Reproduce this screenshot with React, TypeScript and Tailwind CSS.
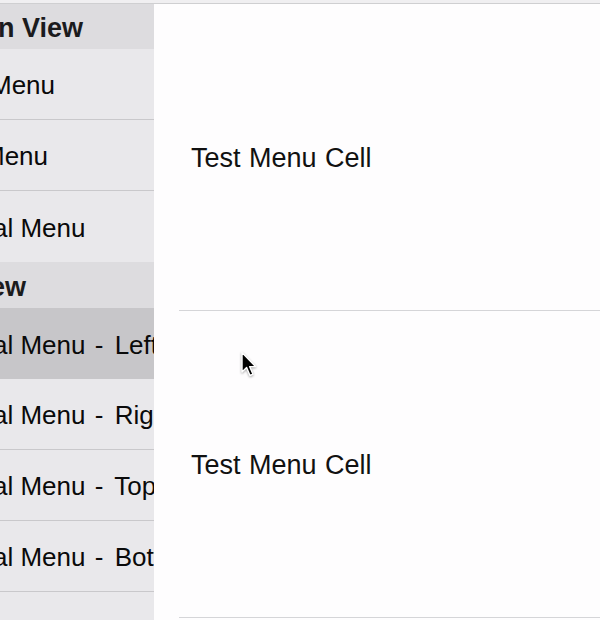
import type { ReactNode } from "react";

type Row = {
  label: string;
  side?: string;
  shift: string;
  selected?: boolean;
  divider?: boolean;
};

const sections: { title: string; shift: string; height: string; rows: Row[] }[] = [
  {
    title: "n View",
    shift: "ml-[-2px]",
    height: "h-[45px] pt-[3px]",
    rows: [
      { label: "Menu", shift: "ml-[-10px]", divider: true },
      { label: "Menu", shift: "ml-[-17px]", divider: true },
      { label: "al Menu", shift: "ml-[-7px]" },
    ],
  },
  {
    title: "ew",
    shift: "ml-[-10px]",
    height: "h-[46px] pt-[5px]",
    rows: [
      { label: "al Menu", side: "Left", shift: "ml-[-7px]", selected: true },
      { label: "al Menu", side: "Right", shift: "ml-[-7px]", divider: true },
      { label: "al Menu", side: "Top", shift: "ml-[-7px]", divider: true },
      { label: "al Menu", side: "Bottom", shift: "ml-[-7px]", divider: true },
    ],
  },
];

function MenuRow({ row }: { row: Row }) {
  return (
    <div
      className={`flex h-[71px] shrink-0 items-center pt-[3px] ${
        row.selected ? "bg-[#c7c6c9]" : ""
      } ${row.divider ? "border-b border-[#c9c8cb]" : ""}`}
    >
      <span className={`whitespace-nowrap text-[26px] text-[#0a0a0a] ${row.shift}`}>
        {row.label}
        {row.side && (
          <>
            {" "}
            <span className="ml-[2px] mr-[4px]">-</span> {row.side}
          </>
        )}
      </span>
    </div>
  );
}

function Cell({ children }: { children: ReactNode }) {
  return (
    <div className="flex h-[307px] shrink-0 flex-col">
      <div className="flex flex-1 items-center pl-[37px] pt-[2px]">
        <span className="whitespace-nowrap text-[27px] text-[#111] [word-spacing:1px]">
          {children}
        </span>
      </div>
      <div className="ml-[25px] h-px bg-[#d5d5d8]" />
    </div>
  );
}

function Cursor() {
  return (
    <svg
      className="absolute left-[240px] top-[351px] drop-shadow-[0_1px_1px_rgba(0,0,0,0.35)]"
      width="17"
      height="28"
      viewBox="0 0 17 28"
    >
      <path
        d="M2 1.5 V21 L6.6 16.6 L10 24.5 L13 23.2 L9.7 15.6 H15.5 Z"
        fill="#000"
        stroke="#fff"
        strokeWidth="1.4"
        strokeLinejoin="round"
      />
    </svg>
  );
}

export default function App() {
  return (
    <div className="relative flex h-[620px] w-[600px] flex-col overflow-hidden bg-[#fefdfe] font-['Liberation_Sans',Arial,sans-serif]">
      <div className="h-[4px] shrink-0 border-b border-[#cfcfd1] bg-[#f0eff1]" />
      <div className="flex min-h-0 flex-1">
        <aside className="flex w-[154px] shrink-0 flex-col overflow-hidden bg-[#e9e8eb]">
          {sections.map((section) => (
            <div key={section.title} className="flex flex-col">
              <div className={`flex shrink-0 items-center bg-[#dddcdf] ${section.height}`}>
                <span
                  className={`whitespace-nowrap text-[27px] font-bold text-[#1b1b1d] ${section.shift}`}
                >
                  {section.title}
                </span>
              </div>
              {section.rows.map((row, i) => (
                <MenuRow key={i} row={row} />
              ))}
            </div>
          ))}
        </aside>
        <main className="flex min-w-0 flex-1 flex-col">
          <Cell>Test Menu Cell</Cell>
          <Cell>Test Menu Cell</Cell>
        </main>
      </div>
      <Cursor />
    </div>
  );
}
